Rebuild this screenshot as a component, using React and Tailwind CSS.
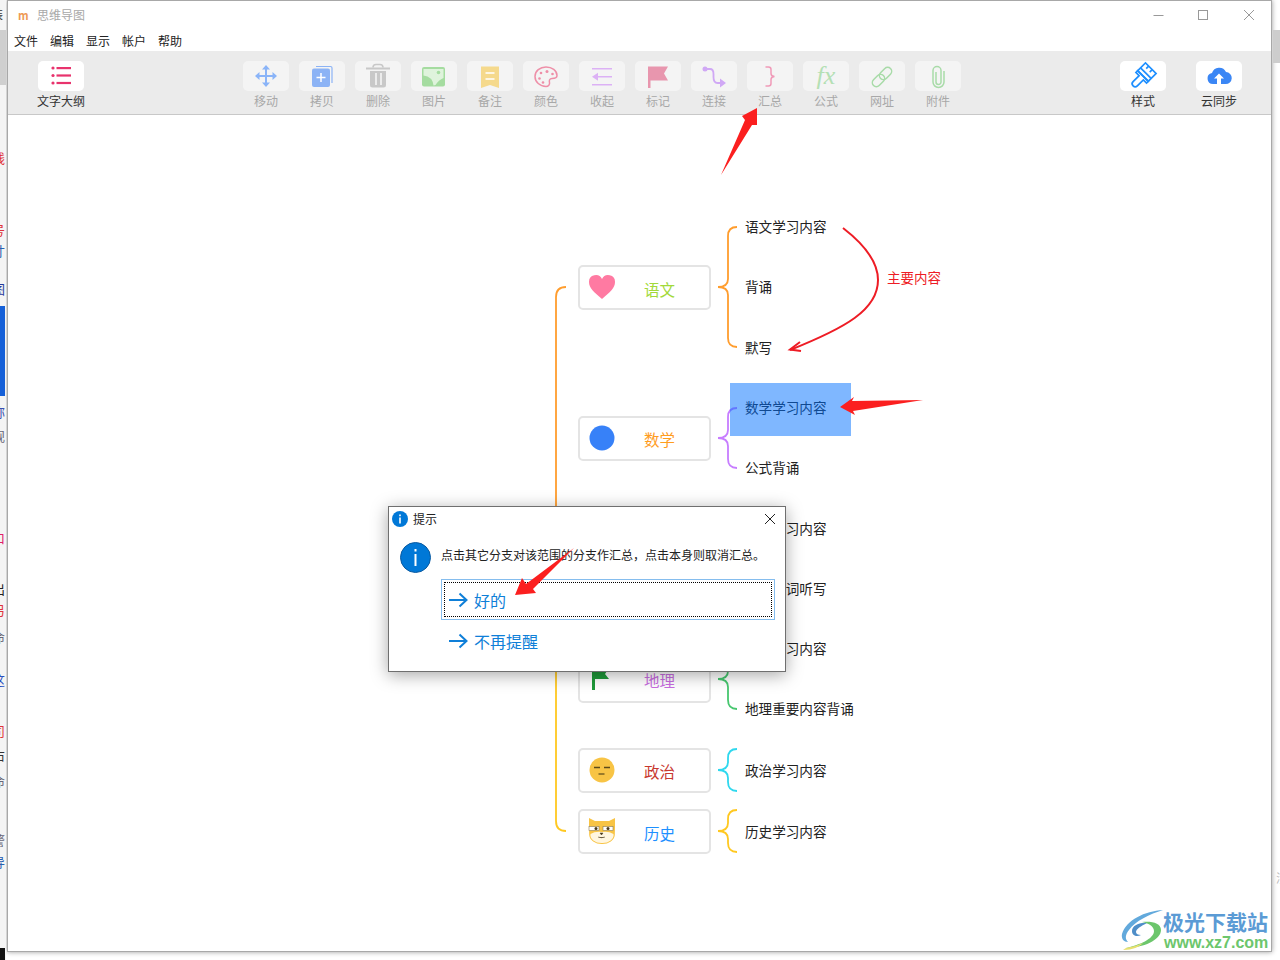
import React from "react";

const B = ({ children }) => (
  <svg width="46" height="30" viewBox="0 0 46 30" fill="none">{children}</svg>
);

const IconList = () => (
  <B>
    <g fill="#e8336d">
      <circle cx="15" cy="7" r="1.6" /><circle cx="15" cy="14.5" r="1.6" /><circle cx="15" cy="22" r="1.6" />
      <rect x="18.5" y="6" width="14.5" height="2.2" /><rect x="18.5" y="13.4" width="14.5" height="2.2" /><rect x="18.5" y="20.9" width="14.5" height="2.2" />
    </g>
  </B>
);
const IconMove = () => (
  <B>
    <g fill="#8ab4f8">
      <rect x="22" y="6" width="2" height="18" /><rect x="14" y="14" width="18" height="2" />
      <path d="M23 4l4 4.5h-8zM23 26l4-4.5h-8zM12 15l4.5-4v8zM34 15l-4.500-4v8z" />
    </g>
  </B>
);
const IconCopy = () => (
  <B>
    <path d="M17 5.500h14.500a1.500 1.500 0 0 1 1.500 1.500v15" stroke="#8cb3f5" strokeWidth="1.200" />
    <rect x="13" y="7.500" width="18" height="18.500" rx="2" fill="#8cb3f5" />
    <path d="M22 12v9M17.500 16.500h9" stroke="#fff" strokeWidth="1.500" />
  </B>
);
const IconTrash = () => (
  <B>
    <rect x="11" y="6.500" width="24" height="2" fill="#c8c8c8" />
    <path d="M18 6.500q0-3 3-3h4q3 0 3 3" stroke="#c8c8c8" strokeWidth="1.600" />
    <path d="M15 10h16v14a2.500 2.500 0 0 1-2.500 2.500h-11A2.500 2.500 0 0 1 15 24z" fill="#c8c8c8" />
    <rect x="20" y="12" width="2" height="12" fill="#ececec" /><rect x="25" y="12" width="2" height="12" fill="#ececec" />
  </B>
);
const IconImage = () => (
  <B>
    <rect x="11" y="6" width="23" height="19.500" rx="2" fill="#a5dca0" />
    <path d="M12.500 8h20v9q-5 2-8 7l-2 .5q-1-9-10-10z" fill="#dff3dc" />
    <circle cx="27.500" cy="11.500" r="1.800" fill="#a5dca0" />
  </B>
);
const IconNote = () => (
  <B>
    <path d="M14 5.500h18v21.500l-9-3-9 3z" fill="#f5d98c" />
    <path d="M18.500 12h9M18.500 18h9" stroke="#fff" strokeWidth="1.300" />
  </B>
);
const IconPalette = () => (
  <B>
    <path d="M23 6c6 0 11 3.500 11 8.500 0 3-3 3-5 3-2.500 0-3 2-2.500 4 .4 2-1 4-3.500 4-6 0-11-4.500-11-10S17 6 23 6z" stroke="#ee8fa8" strokeWidth="1.500" />
    <g fill="#ee8fa8">
      <circle cx="18" cy="12" r="1.300" /><circle cx="24" cy="10.500" r="1.500" /><circle cx="29.500" cy="13" r="1.300" /><circle cx="16.500" cy="17.500" r="1.300" /><circle cx="20" cy="21.500" r="1.300" />
    </g>
  </B>
);
const IconCollapse = () => (
  <B>
    <g fill="#dcb1f5">
      <rect x="13" y="7" width="20" height="1.500" /><rect x="13" y="23" width="20" height="1.500" /><rect x="19" y="15" width="14" height="1.500" />
      <path d="M13 15.700l6-4v8z" />
    </g>
  </B>
);
const IconFlag = () => (
  <B>
    <path d="M13 5.500h20l-4 7 4 7H15.500V27H13z" fill="#e896ae" />
  </B>
);
const IconConnect = () => (
  <B>
    <circle cx="14" cy="8" r="2.500" fill="#d0a8f5" />
    <path d="M14 8h5c3 0 3.500 2 3.500 5v3c0 3 1 6 4 6H30" stroke="#d0a8f5" strokeWidth="1.800" />
    <path d="M35 22l-6-4.500v9z" fill="#d0a8f5" />
  </B>
);
const IconSum = () => (
  <B>
    <path d="M18.500 6h3c1.500 0 2.500 1 2.500 2.500v4c0 1.500 1 2.800 3.500 3-2.500.2-3.500 1.500-3.500 3v4c0 1.500-1 2.500-2.500 2.500h-3" stroke="#f09ab8" strokeWidth="1.500" />
  </B>
);
const IconLink = () => (
  <B>
    <g stroke="#a8dba8" strokeWidth="1.500" transform="rotate(-45 23 16)">
      <rect x="11" y="12" width="14" height="8" rx="4" />
      <rect x="21" y="12" width="14" height="8" rx="4" />
    </g>
  </B>
);
const IconClip = () => (
  <B>
    <path d="M21 11v10a2.500 2.500 0 0 0 5 0V9.500a4 4 0 0 0-8 0V21a5.500 5.500 0 0 0 11 0V10" stroke="#a8dba8" strokeWidth="1.500" />
  </B>
);
const IconBrush = () => (
  <B>
    <g stroke="#1e8fff" strokeWidth="1.700" transform="rotate(45 23 15)">
      <path d="M15.500 4h15v11h-15z" />
      <path d="M15.500 11h15" />
      <path d="M20 4v3.500M25 4v3.500" />
      <path d="M15.500 15h15v2.500h-4.500V26a3 3 0 0 1-6 0v-8.500h-4.500z" />
    </g>
  </B>
);
const IconCloud = () => (
  <B>
    <path d="M17 23a5.500 5.500 0 0 1-1-10.900A7.500 7.500 0 0 1 30 11a6 6 0 0 1 -.5 12z" fill="#3a86f5" />
    <path d="M23 12.500l5 5h-3V23h-4v-5.500h-3z" fill="#fff" />
  </B>
);
const IconFx = () => (
  <div className="w-[46px] h-[30px] flex items-center justify-center [font-family:'Liberation_Serif',serif] italic text-[26px] leading-none text-[#b4e0b4]">fx</div>
);

const tools = [
  ["移动", <IconMove />],
  ["拷贝", <IconCopy />],
  ["删除", <IconTrash />],
  ["图片", <IconImage />],
  ["备注", <IconNote />],
  ["颜色", <IconPalette />],
  ["收起", <IconCollapse />],
  ["标记", <IconFlag />],
  ["连接", <IconConnect />],
  ["汇总", <IconSum />],
  ["公式", <IconFx />],
  ["网址", <IconLink />],
  ["附件", <IconClip />],
];

const Tool = ({ label, icon, active }) => (
  <div className="w-[46px] flex flex-col items-center">
    <div className={active ? "w-[46px] h-[30px] rounded-[5px] bg-white" : "w-[46px] h-[30px] rounded-[5px] bg-[#f4f4f4]"}>{icon}</div>
    <div className={active ? "mt-[1px] text-[12px] leading-[18px] whitespace-nowrap text-[#333]" : "mt-[1px] text-[12px] leading-[18px] whitespace-nowrap text-[#a8a8a8]"}>{label}</div>
  </div>
);

const Heart = () => (
  <svg width="28" height="26" viewBox="0 0 28 26"><path d="M14 25C6 18 1 14 1 8a6.800 6.800 0 0 1 13-3 6.800 6.800 0 0 1 13 3c0 6-5 10-13 17z" fill="#ff7aa2" /></svg>
);
const Dot = () => (
  <svg width="26" height="26" viewBox="0 0 26 26"><circle cx="13" cy="13" r="12.500" fill="#3781f8" /></svg>
);
const Flag = () => (
  <svg width="22" height="24" viewBox="0 0 22 24"><path d="M1 0h3v2h14l-4 6 4 5H4v11H1z" fill="#1f9a3a" /></svg>
);
const Face = () => (
  <svg width="26" height="26" viewBox="0 0 26 26">
    <circle cx="13" cy="13" r="12.500" fill="#f8c445" />
    <path d="M5 10.500h6M15 10.500h6" stroke="#5d4a1a" strokeWidth="1.600" />
    <path d="M9.500 17h6" stroke="#5d4a1a" strokeWidth="1.200" />
  </svg>
);
const Dog = () => (
  <svg width="28" height="28" viewBox="0 0 28 28">
    <path d="M1 9V1l6 3h14l6-3v8l-.2 9A12.500 9.500 0 0 1 14 27 12.500 9.500 0 0 1 1.200 18z" fill="#f8c445" />
    <path d="M2.500 17q5-3 11.500-2 6.500-1 11.500 2A11 8 0 0 1 14 26 11 8 0 0 1 2.500 17z" fill="#fff6e0" />
    <rect x="1" y="9.500" width="10" height="4" fill="#fff" stroke="#8a7a50" strokeWidth=".6" />
    <rect x="15" y="9.500" width="10" height="4" fill="#fff" stroke="#8a7a50" strokeWidth=".6" />
    <circle cx="8" cy="11.500" r="1.500" fill="#4a3b1c" /><circle cx="20" cy="11.500" r="1.500" fill="#4a3b1c" />
    <path d="M12 16h3l-1.500 2zM10 20q3.500 1.500 7 0" fill="#4a3b1c" stroke="#4a3b1c" strokeWidth=".5" />
  </svg>
);

const nodes = [
  { t: "语文", box: "top-[265px]", txt: "text-[#a2d93a] mt-[3px]", icon: <Heart />, ic: "-mt-[2px]" },
  { t: "数学", box: "top-[416px]", txt: "text-[#ff9d1f]", icon: <Dot />, ic: "-mt-[2px]" },
  { t: "英语", box: "top-[537px]", txt: "text-[#3781f8]", icon: <Dot />, ic: "" },
  { t: "地理", box: "top-[658px]", txt: "text-[#c86de0] -mt-[1px]", icon: <Flag />, ic: "-mt-[5px]" },
  { t: "政治", box: "top-[748px]", txt: "text-[#c8382f] mt-[1px]", icon: <Face />, ic: "-mt-[2px]" },
  { t: "历史", box: "top-[809px]", txt: "text-[#1e90ff] mt-[3px]", icon: <Dog />, ic: "-mt-[2px]" },
];

const leaves = [
  ["语文学习内容", "top-[216px]"],
  ["背诵", "top-[276px]"],
  ["默写", "top-[337px]"],
  ["数学学习内容", "top-[397px]"],
  ["公式背诵", "top-[457px]"],
  ["英语学习内容", "top-[518px]"],
  ["英语单词听写", "top-[578px]"],
  ["地理学习内容", "top-[638px]"],
  ["地理重要内容背诵", "top-[698px]"],
  ["政治学习内容", "top-[760px]"],
  ["历史学习内容", "top-[821px]"],
];

const brace = (top, mid, bot, c) => (
  <path
    d={`M737 ${top}q-9 0-9 9V${mid - 8}q0 8-10 8 10 0 10 8V${bot - 9}q0 9 9 9`}
    stroke={c}
    strokeWidth="1.800"
    fill="none"
  />
);

const strip = [
  ["线", "top-[150px]", "text-[#e0323a]"],
  ["1", "top-[192px]", "text-[#888]"],
  ["号", "top-[222px]", "text-[#e0323a]"],
  ["寸", "top-[243px]", "text-[#2a5fb0]"],
  ["图", "top-[281px]", "text-[#23389a]"],
  ["称", "top-[404px]", "text-[#3a4fb0]"],
  ["规", "top-[428px]", "text-[#667]"],
  ["2", "top-[482px]", "text-[#4a80c0]"],
  ["口", "top-[530px]", "text-[#e0206a]"],
  ["1", "top-[559px]", "text-[#888]"],
  ["出", "top-[581px]", "text-[#222]"],
  ["另", "top-[602px]", "text-[#e0323a]"],
  ["命", "top-[629px]", "text-[#667]"],
  ["这", "top-[672px]", "text-[#2a4fc0]"],
  ["1", "top-[701px]", "text-[#888]"],
  ["司", "top-[723px]", "text-[#e0323a]"],
  ["右", "top-[747px]", "text-[#333]"],
  ["命", "top-[773px]", "text-[#667]"],
  ["d", "top-[816px]", "text-[#2a4fc0]"],
  ["警", "top-[832px]", "text-[#667]"],
  ["导", "top-[854px]", "text-[#2a5fb0]"],
];

const DialogArrow = () => (
  <svg width="19" height="16" viewBox="0 0 19 16" fill="none"><path d="M0 8h17M10.500 1.500L17.500 8l-7 6.500" stroke="#0f7fd8" strokeWidth="2" /></svg>
);

export default function App() {
  return (
    <div className="relative w-[1280px] h-[960px] overflow-hidden bg-white text-[#222] [font-family:'Noto_Sans_CJK_SC',sans-serif]">
      {/* window */}
      <div className="ml-[7px] w-[1265px] h-[952px] bg-white border border-[#a8a8a8] shadow-[0_0_5px_rgba(0,0,0,0.4)] flex flex-col">
        <div className="h-[28px] flex items-center shrink-0 relative">
          <span className="ml-[10px] w-[19px] text-[11px] font-bold text-[#ee9a55] leading-none">m</span>
          <span className="text-[12px] text-[#a8a8a8]">思维导图</span>
          <svg className="ml-auto" width="120" height="26" viewBox="0 0 120 26" fill="none" stroke="#999" strokeWidth="1">
            <path d="M2.500 13.500h10" />
            <rect x="47.500" y="8.500" width="9" height="9" />
            <path d="M93 8l10 10M103 8l-10 10" />
          </svg>
        </div>
        <div className="h-[22px] shrink-0 flex items-center pt-[2px] pl-[6px] gap-[12px] text-[12px] text-[#222]">
          <span>文件</span><span>编辑</span><span>显示</span><span>帐户</span><span>帮助</span>
        </div>
        <div className="h-[64px] shrink-0 bg-[#ebebeb] border-b border-[#c8c8c8] pt-[10px] pl-[30px] pr-[29px] flex items-start">
          <Tool label="文字大纲" icon={<IconList />} active />
          <div className="ml-[159px] flex gap-[10px]">
            {tools.map(([l, i]) => <Tool key={l} label={l} icon={i} />)}
          </div>
          <div className="ml-auto flex gap-[30px]">
            <Tool label="样式" icon={<IconBrush />} active />
            <Tool label="云同步" icon={<IconCloud />} active />
          </div>
        </div>
        <div className="flex-1" />
      </div>

      {/* the desktop behind the window */}
      <div className="absolute left-0 top-0 w-[6px] h-[960px] overflow-hidden bg-[#f4f4f4]">
        <div className="absolute left-0 top-[30px] w-[6px] h-[55px] bg-[#cfcfcf]" />
        <div className="absolute left-0 top-[306px] w-[5px] h-[90px] bg-[#1560d8]" />
        <div className="absolute left-0 top-[948px] w-[5px] h-[12px] bg-[#111]" />
        <span className="absolute -left-[9px] top-[6px] text-[12px] leading-4 text-[#333]">装</span>
        {strip.map(([c, top, col], i) => (
          <span key={i} className={`absolute -left-[8px] text-[13px] leading-4 ${top} ${col}`}>{c}</span>
        ))}
      </div>
      <div className="absolute left-[1273px] top-[30px] w-[7px] h-[33px] bg-[#cdcdcd]" />
      <span className="absolute left-[1276px] top-[870px] text-[12px] leading-4 text-[#bbb]">涉</span>

      {/* mind map canvas */}
      <svg className="absolute left-0 top-0" width="1280" height="960" viewBox="0 0 1280 960" fill="none">
        <path d="M566 287q-10 0-10 10V520" stroke="#ff9d2e" strokeWidth="1.800" />
        <path d="M556 660V821q0 10 10 10" stroke="#ffc820" strokeWidth="1.800" />
        {brace(227, 287, 347, "#ff9d2e")}
        {brace(408, 438, 468, "#c77dff")}
        {brace(649, 679, 709, "#47c76f")}
        {brace(749, 770, 791, "#2fd8ee")}
        {brace(810, 831, 852, "#ffc820")}
        <path d="M843 228C865 245 878 262 878 280C878 310 845 328 790 350" stroke="#ee1c25" strokeWidth="2" />
        <path d="M800 342L790 349.500L801 351" stroke="#ee1c25" strokeWidth="2" />
      </svg>

      {nodes.map((n) => (
        <div key={n.t} className={`absolute left-[578px] w-[133px] h-[45px] bg-white border-2 border-[#e4e4e4] rounded-[5px] flex items-center ${n.box}`}>
          <div className={`w-[43px] flex justify-center ${n.ic}`}>{n.icon}</div>
          <div className={`ml-[21px] text-[15.500px] leading-[20px] ${n.txt}`}>{n.t}</div>
        </div>
      ))}

      {leaves.map(([t, top]) => (
        <div key={t} className={`absolute left-[745px] text-[13.600px] leading-[20px] whitespace-nowrap text-[#222] ${top}`}>{t}</div>
      ))}
      <div className="absolute left-[887px] top-[267px] text-[13.500px] leading-[20px] text-[#ee1c25] whitespace-nowrap">主要内容</div>
      <div className="absolute left-[730px] top-[383px] w-[121px] h-[53px] bg-[#0070ff]/50" />

      {/* dialog */}
      <div className="absolute left-[388px] top-[506px] w-[398px] h-[166px] bg-white border border-[#6f6f6f] shadow-[0_3px_16px_rgba(0,0,0,0.35)] flex flex-col">
        <div className="h-[23px] flex items-center pl-[3px] pr-[9px] shrink-0">
          <svg width="16" height="16" viewBox="0 0 16 16"><circle cx="8" cy="8" r="8" fill="#0078d7" /><rect x="7.200" y="6.500" width="1.600" height="6" fill="#fff" /><rect x="7.200" y="3.500" width="1.600" height="1.700" fill="#fff" /></svg>
          <span className="ml-[5px] text-[12px] text-[#222]">提示</span>
          <svg className="ml-auto" width="12" height="12" viewBox="0 0 12 12" fill="none"><path d="M1 1l10 10M11 1L1 11" stroke="#222" strokeWidth="1" /></svg>
        </div>
        <div className="flex items-center pl-[11px] mt-[12px] shrink-0">
          <svg width="31" height="31" viewBox="0 0 31 31"><circle cx="15.500" cy="15.500" r="15" fill="#0078d7" stroke="#0a5aa0" strokeWidth="1" /><rect x="14.500" y="12" width="2" height="12" fill="#fff" /><rect x="14.500" y="7" width="2" height="2.500" fill="#fff" /></svg>
          <span className="ml-[10px] mb-[6px] text-[12px] leading-[20px] whitespace-nowrap text-[#222]">点击其它分支对该范围的分支作汇总，点击本身则取消汇总。</span>
        </div>
        <div className="ml-[52px] mt-[6px] w-[334px] h-[41px] border border-[#85bdee] p-[2px] shrink-0">
          <div className="h-full border border-dotted border-black flex items-center pl-[4px]">
            <DialogArrow />
            <span className="ml-[6px] text-[16px] leading-none text-[#0f7fd8]">好的</span>
          </div>
        </div>
        <div className="ml-[60px] mt-[9px] flex items-center">
          <DialogArrow />
          <span className="ml-[6px] text-[16px] leading-[24px] text-[#0f7fd8]">不再提醒</span>
        </div>
      </div>

      {/* red annotation arrows */}
      <svg className="absolute left-0 top-0" width="1280" height="960" viewBox="0 0 1280 960">
        <g fill="#fb1f1f">
          <path d="M757 108L742 116L745 120L721 175L752 125L757 125z" />
          <path d="M840 407L854 397L852 401L923 400L853 411L855 415z" />
          <path d="M515 595L522 578L526 584L574 548L533 589L536 593z" />
        </g>
      </svg>

      {/* watermark */}
      <svg className="absolute left-[1120px] top-[908px]" width="46" height="44" viewBox="0 0 46 44" fill="none">
        <path d="M43 2C25 3 6 12 2 26c-1 5 2 8 6 8-3-3-3-7 1-12C15 13 30 6 43 2z" fill="#62a9dc" />
        <path d="M27 15c-8-1-15 3-15 8s5 6 9 4c-3 0-5-1-5-3 0-3 5-6 11-9z" fill="#4f8ec8" />
        <path d="M22 14c10-1 19 1 19 8 0 10-18 18-35 18 13-3 28-9 28-17 0-5-6-8-12-9z" fill="#6cc66c" />
        <path d="M6 40c6-1 12-3 17-5-4 4-10 7-20 7z" fill="#e8e070" />
      </svg>
      <div className="absolute left-[1163px] top-[906px] text-[21px] leading-[30px] font-bold whitespace-nowrap text-[#5b9bd5]">极光下载站</div>
      <div className="absolute left-[1164px] top-[933px] text-[16px] leading-[20px] font-bold whitespace-nowrap text-[#6cc66c] [font-family:'Liberation_Sans',sans-serif]">www.xz7.com</div>
    </div>
  );
}
